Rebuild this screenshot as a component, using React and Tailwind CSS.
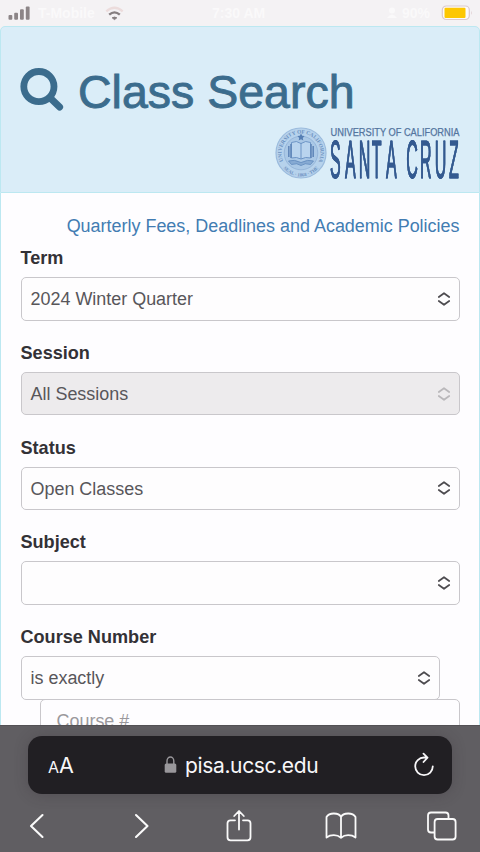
const sans = "font-['Liberation_Sans',Arial,sans-serif]";

function StatusBar() {
  return (
    <div className="flex h-[26px] shrink-0 items-center bg-[#f4f2f4] text-[14px] text-[#faf9fa] font-semibold">
      <svg className="ml-2 mt-[-1px] shrink-0" width="23" height="16" viewBox="0 0 23 16" fill="#8c8587">
        <rect x="0.5" y="10" width="3.8" height="4.8" rx="1" />
        <rect x="6.2" y="7.7" width="3.8" height="7.1" rx="1" />
        <rect x="12" y="4.3" width="3.8" height="10.5" rx="1" />
        <rect x="17.8" y="1.5" width="3.8" height="13.3" rx="1" />
      </svg>
      <span className="ml-[7px] w-[66px] whitespace-nowrap">T-Mobile</span>
      <svg className="mt-[1px] shrink-0" width="22" height="16" viewBox="0 0 22 16" fill="none" strokeWidth="2.3">
        <path d="M2.3 5.4Q10.5 -1.8 18.7 5.4" stroke="#ecdcdc" />
        <path d="M5.2 8.7Q10.5 4 15.8 8.7" stroke="#857e80" />
        <path d="M8.2 11.8Q10.5 10.4 12.8 11.8L10.5 13.6Z" fill="#857e80" stroke="#857e80" strokeWidth="1" />
      </svg>
      <span className="ml-[86px] w-[66px] whitespace-nowrap">7:30 AM</span>
      <svg className="ml-[108px] shrink-0" width="12" height="12" viewBox="0 0 12 12" fill="#faf9fa">
        <circle cx="6" cy="3.5" r="3" />
        <path d="M1 11Q6 4 11 11Z" />
      </svg>
      <span className="ml-1 w-[39px] shrink-0">90%</span>
      <svg className="shrink-0" width="32" height="18" viewBox="0 0 32 18">
        <rect x="1.3" y="2" width="27" height="13.5" rx="4" fill="#fbfafb" stroke="#dcc9cc" strokeWidth="1.2" />
        <rect x="3.5" y="3.7" width="21" height="10.2" rx="1" fill="#fdc702" />
        <path d="M30.2 6.5Q31.5 8.7 30.2 11Z" fill="#dcc9cc" />
      </svg>
    </div>
  );
}

function Seal() {
  return (
    <svg className="shrink-0" width="52" height="54" viewBox="0 0 52 54">
      <defs>
        <path id="sealTop" d="M8.2 35A19.5 19.5 0 1 1 43.8 35" />
        <path id="sealBottom" d="M5 36A22.5 22.5 0 0 0 47 36" />
      </defs>
      <circle cx="26" cy="27" r="25" fill="#b6d2ec" stroke="#9bbbdd" strokeWidth="1.2" />
      <circle cx="26" cy="27" r="16.8" fill="#aac8e6" stroke="#8fb0d5" strokeWidth="0.8" />
      <g fill="#6c91c0" fontFamily="Liberation Serif, serif" fontWeight="bold" fontSize="5.4">
        <text textLength="78"><textPath href="#sealTop">UNIVERSITY OF CALIFORNIA</textPath></text>
        <text fontSize="4.8"><textPath href="#sealBottom" startOffset="50%" textAnchor="middle">SEAL · 1868 · THE</textPath></text>
      </g>
      <path d="M26 17.5Q21.5 14 16.5 16.5V32Q21.5 30.5 26 33Q30.5 30.5 35.5 32V16.5Q30.5 14 26 17.5Z" fill="#b9d4ee" stroke="#6c94c5" strokeWidth="1" />
      <path d="M26 17V33" stroke="#6c94c5" strokeWidth="1" />
      <path d="M13.8 20V31M16 18V32M36 18V32M38.2 20V31" stroke="#6288ba" strokeWidth="1.6" />
      <path d="M26 7.5L27.2 9.8L29.6 10L27.8 12L28.3 14.6L26 13.2L23.7 14.6L24.2 12L22.4 10L24.8 9.8Z" fill="#567fb4" />
      <path d="M13.5 35Q19 33 26 36.5Q33 33 38.5 35L35.5 38.5Q30 36.5 26 39.5Q22 36.5 16.5 38.5Z" fill="#86aad3" stroke="#6089bc" strokeWidth="0.8" />
    </svg>
  );
}

function SantaCruz() {
  return (
    <svg className="ml-[3px] shrink-0" width="132" height="54" viewBox="0 0 132 54">
      <text x="0.5" y="9.8" fontSize="10" textLength="129" lengthAdjust="spacingAndGlyphs" fill="#54759f" stroke="#54759f" strokeWidth="0.25" fontFamily="Liberation Sans, Arial, sans-serif">UNIVERSITY OF CALIFORNIA</text>
      <text
        className="[filter:drop-shadow(0.8px_0_0_#345a90)]"
        transform="translate(0 51.6) scale(0.3 1)"
        x="0 50 96 139 187 225 254 300 349 397"
        y="0"
        fontSize="53.5"
        fill="#345a90"
        stroke="#345a90"
        strokeWidth="0.8"
        fontFamily="Liberation Sans, Arial, sans-serif"
      >SANTA CRUZ</text>
    </svg>
  );
}

function PanelHeader() {
  return (
    <header className="flex h-[167px] shrink-0 flex-col rounded-t-[5px] border border-[#bce8f1] bg-[#daedf8]">
      <h1 className="ml-[19px] mt-[38px] flex h-[54px] items-center whitespace-nowrap text-[46.5px] leading-[54px] text-[#3b6c8d] [-webkit-text-stroke:0.9px_#3b6c8d]">
        <svg className="mb-[5px] mr-[14px] shrink-0" width="44" height="44" viewBox="0 0 44 44" fill="none" stroke="#3b6c8d">
          <circle cx="18.9" cy="18.6" r="15.1" strokeWidth="6.8" />
          <path d="M30.5 30.2L39.6 39.1" strokeWidth="7" strokeLinecap="round" />
        </svg>
        Class Search
      </h1>
      <div className="ml-auto mr-[17px] mt-[7px] flex">
        <Seal />
        <SantaCruz />
      </div>
    </header>
  );
}

function Chevrons({ color }) {
  return (
    <svg className="shrink-0" width="14" height="14" viewBox="0 0 14 14" fill="none" stroke={color} strokeWidth="1.7" strokeLinecap="round" strokeLinejoin="round">
      <path d="M1.8 5L7 1.2L12.2 5M1.8 9L7 12.8L12.2 9" />
    </svg>
  );
}

function Field({ label, value, disabled, narrow }) {
  return (
    <div className="h-[94.75px] shrink-0">
      <div className="h-[30px] text-[18.1px] font-bold leading-[22px] text-[#333136]">{label}</div>
      <div
        className={`flex h-[43.5px] items-center justify-between rounded-[5px] border-[1.4px] border-[#c9c7cb] pl-[9px] pr-[8px] text-[17.95px] text-[#58565a] ${disabled ? "bg-[#edebed]" : "bg-[#fefdfe]"} ${narrow ? "mr-[20px]" : ""}`}
      >
        <span className="pt-[2px]">{value}</span>
        <Chevrons color={disabled ? "#b9b7ba" : "#4d4b4f"} />
      </div>
    </div>
  );
}

function SearchForm() {
  return (
    <main className="flex min-h-0 flex-1 flex-col overflow-hidden border-l-[1.5px] border-r border-[#bce8f1] bg-[#fefdff] pl-[19.5px] pr-[19.5px]">
      <a className="mt-[21px] h-[33px] shrink-0 whitespace-nowrap text-right text-[17.95px] leading-[24px] text-[#427cb2]">
        Quarterly Fees, Deadlines and Academic Policies
      </a>
      <Field label="Term" value="2024 Winter Quarter" />
      <Field label="Session" value="All Sessions" disabled />
      <Field label="Status" value="Open Classes" />
      <Field label="Subject" value="" />
      <Field label="Course Number" value="is exactly" narrow />
      <div className="-mt-[21.5px] ml-[19px] h-[44px] shrink-0 rounded-[5px] border-[1.4px] border-[#c9c7cb] pl-[16px] text-[17.95px] leading-[43px] text-[#9a989c]">
        Course #
      </div>
    </main>
  );
}

function BrowserBar() {
  return (
    <footer className="flex h-[127px] shrink-0 flex-col border-t border-[#535155] bg-[#605e62]">
      <div className="mx-[28px] mt-[10px] flex h-[58px] shrink-0 items-center rounded-[14px] bg-[#211f23] font-[Inter,sans-serif] text-[#f8f7f9] shadow-[0_1px_14px_rgba(50,44,50,0.28)]">
        <div className="ml-[20px] mt-[2px] flex w-[116px] items-baseline">
          <span className="text-[16px] leading-[24px]">A</span>
          <span className="text-[21.5px] leading-[24px]">A</span>
        </div>
        <svg width="13" height="18" viewBox="0 0 13 18">
          <path d="M3 8V5A3.4 4 0 0 1 9.8 5V8" fill="none" stroke="#99979b" strokeWidth="1.4" />
          <rect x="0.7" y="7.5" width="11.6" height="9.3" rx="1.5" fill="#99979b" />
        </svg>
        <span className="ml-[8px] w-[134px] whitespace-nowrap pt-[1px] text-[21px] tracking-[-0.36px]">pisa.ucsc.edu</span>
        <svg className="ml-auto mr-[17px]" width="22" height="26" viewBox="0 0 22 26" fill="none" stroke="#f8f7f9" strokeWidth="1.8" strokeLinecap="round" strokeLinejoin="round">
          <path d="M13 5.5H11A8.8 8.8 0 1 0 19.8 14.3M10.5 1.7L14.5 5.7L10.5 10" />
        </svg>
      </div>
      <nav className="flex flex-1 items-center justify-between pl-[28px] pr-[23px] pt-[5px]">
        <svg width="18" height="28" viewBox="0 0 18 28" fill="none" stroke="#fafafa" strokeWidth="2.1" strokeLinecap="round" strokeLinejoin="round">
          <path d="M14.5 3L3 14L14.5 25" />
        </svg>
        <svg className="ml-[19px]" width="18" height="28" viewBox="0 0 18 28" fill="none" stroke="#fafafa" strokeWidth="2.1" strokeLinecap="round" strokeLinejoin="round">
          <path d="M3 3L14.5 14L3 25" />
        </svg>
        <svg className="ml-[7px] mr-[1px]" width="28" height="34" viewBox="0 0 28 34" fill="none" stroke="#fafafa" strokeWidth="1.8" strokeLinecap="round" strokeLinejoin="round">
          <path d="M10 11.3H5.5Q2.5 11.3 2.5 14.3V28.3Q2.5 31.3 5.5 31.3H22.5Q25.5 31.3 25.5 28.3V14.3Q25.5 11.3 22.5 11.3H18M14 20.5V2.3M9.2 7L14 2L18.8 7" />
        </svg>
        <svg className="ml-[3px] mt-[1px]" width="32" height="28" viewBox="0 0 32 28" fill="none" stroke="#fafafa" strokeWidth="1.8" strokeLinecap="round" strokeLinejoin="round">
          <path d="M16 5Q14.5 1.5 8.8 1.5Q3.5 1.5 1.5 5V25.5Q4.5 23.2 8.8 23.2Q13 23.2 16 25.8Q19 23.2 23.2 23.2Q27.5 23.2 30.5 25.5V5Q28.5 1.5 23.2 1.5Q17.5 1.5 16 5V25.8" />
        </svg>
        <svg className="ml-[2px]" width="31" height="30" viewBox="0 0 31 30" fill="none" stroke="#fafafa" strokeWidth="1.8" strokeLinejoin="round">
          <rect x="8.6" y="8" width="21" height="20.5" rx="3" />
          <path d="M8.6 21.5H5Q2 21.5 2 18.5V4.5Q2 1.5 5 1.5H19.5Q22.5 1.5 22.5 4.5V8" />
        </svg>
      </nav>
    </footer>
  );
}

export default function App() {
  return (
    <div className={`flex h-[852px] w-[480px] flex-col overflow-hidden bg-[#f4f2f4] ${sans}`}>
      <StatusBar />
      <PanelHeader />
      <SearchForm />
      <BrowserBar />
    </div>
  );
}
